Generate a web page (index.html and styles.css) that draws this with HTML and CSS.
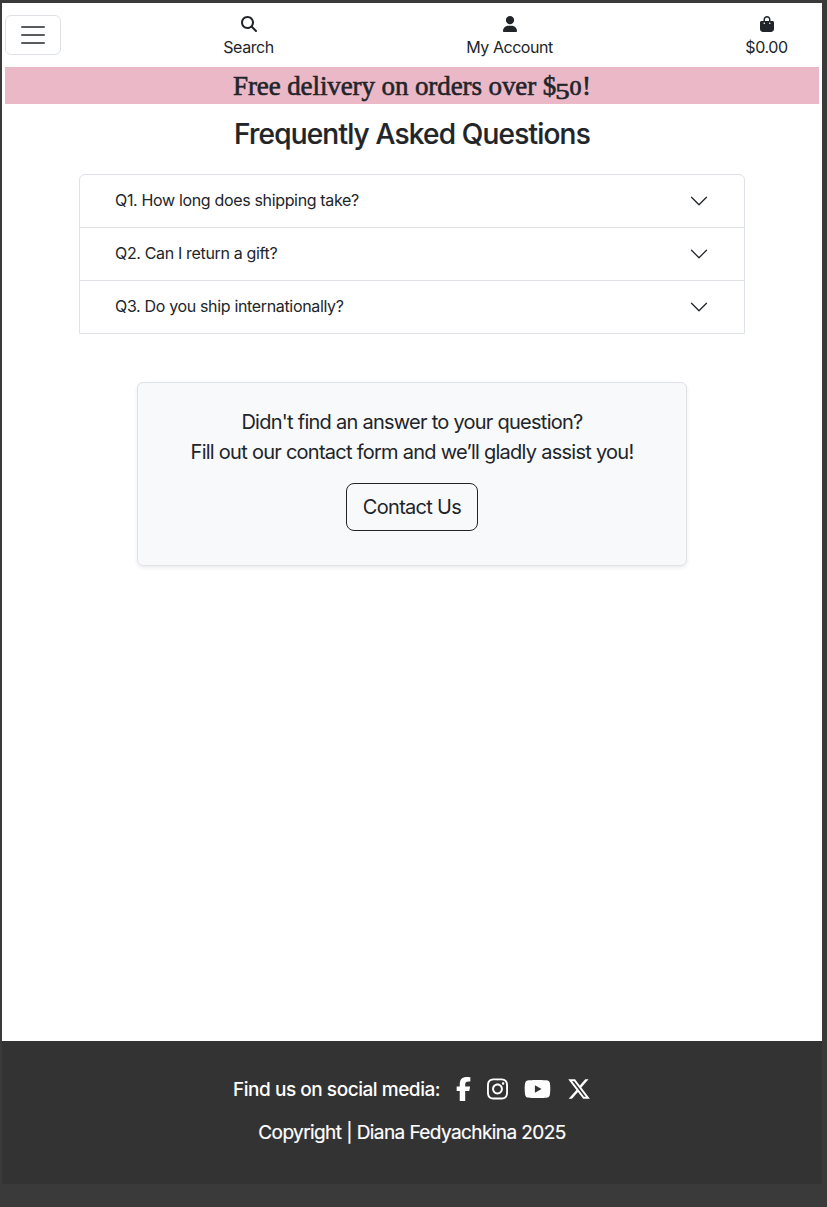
FILE: index.html
```html
<!DOCTYPE html>
<html lang="en">
<head>
<meta charset="utf-8">
<title>Frequently Asked Questions</title>
<link rel="stylesheet" href="styles.css">
</head>
<body>
<div class="page">
  <header class="navbar">
    <button class="toggler" aria-label="Menu">
      <svg width="30" height="30" viewBox="0 0 30 30"><path d="M4 7h22M4 15h22M4 23h22" fill="none" stroke="currentColor" stroke-width="2" stroke-linecap="round"/></svg>
    </button>
    <a class="nav-item search">
      <svg width="16" height="16" viewBox="0 0 512 512"><path d="M416 208c0 45.9-14.9 88.3-40 122.7L502.6 457.4c12.5 12.5 12.5 32.8 0 45.3s-32.8 12.5-45.3 0L330.7 376c-34.4 25.2-76.8 40-122.7 40C93.1 416 0 322.9 0 208S93.1 0 208 0S416 93.1 416 208zM208 352a144 144 0 1 0 0-288 144 144 0 1 0 0 288z"/></svg>
      <span>Search</span>
    </a>
    <a class="nav-item account">
      <svg width="16" height="16" viewBox="-32 0 512 512"><path d="M224 264a132 132 0 1 0 0-264 132 132 0 1 0 0 264zM176 312C78.800 312 0 382.800 0 480 0 497.700 14.300 512 32 512H416c17.700 0 32-14.300 32-32 0-97.200-78.800-168-176-168z"/></svg>
      <span>My Account</span>
    </a>
    <a class="nav-item cart">
      <svg width="14" height="16" viewBox="0 0 448 512"><path d="M160 112c0-35.300 28.700-64 64-64s64 28.700 64 64v48H160V112zm-48 48H48c-26.500 0-48 21.500-48 48V416c0 53 43 96 96 96H352c53 0 96-43 96-96V208c0-26.500-21.500-48-48-48H336V112C336 50.100 285.900 0 224 0S112 50.100 112 112v48zm24 48a24 24 0 1 1 0 48 24 24 0 1 1 0-48zm152 24a24 24 0 1 1 48 0 24 24 0 1 1 -48 0z"/></svg>
      <span>$0.00</span>
    </a>
  </header>
  <div class="banner"><span>Free delivery on orders over $<span class="five">5</span><span class="zero">0</span>!</span></div>
  <main class="main">
    <h1 class="title"><span>Frequently Asked Questions</span></h1>
    <div class="accordion">
      <div class="question"><span class="question-text">Q1. How long does shipping take?</span><svg class="chevron" viewBox="0 0 16 16"><path d="m2 5 6 6 6-6"/></svg></div>
      <div class="question"><span class="question-text">Q2. Can I return a gift?</span><svg class="chevron" viewBox="0 0 16 16"><path d="m2 5 6 6 6-6"/></svg></div>
      <div class="question"><span class="question-text">Q3. Do you ship internationally?</span><svg class="chevron" viewBox="0 0 16 16"><path d="m2 5 6 6 6-6"/></svg></div>
    </div>
    <section class="card">
      <p class="card-text"><span>Didn't find an answer to your question?</span><span>Fill out our contact form and we’ll gladly assist you!</span></p>
      <a class="button">Contact Us</a>
    </section>
  </main>
  <footer class="footer">
    <div class="social">
      <span class="social-label">Find us on social media:</span>
      <svg width="15" height="24" viewBox="0 0 320 512"><path d="M80 299.300V512H196V299.300h86.500l18-97.800H196V166.900c0-51.700 20.300-71.500 72.700-71.500c16.300 0 29.400 .4 37 1.200V7.900C291.400 4 256.400 0 236.200 0C129.300 0 80 50.500 80 159.400v42.100H14v97.800H80z"/></svg>
      <svg width="21" height="24" viewBox="0 0 448 512"><path d="M224.100 141c-63.600 0-114.900 51.300-114.900 114.900s51.300 114.900 114.900 114.900S339 319.500 339 255.900 287.700 141 224.100 141zm0 189.600c-41.100 0-74.700-33.500-74.700-74.700s33.500-74.700 74.700-74.700 74.700 33.500 74.700 74.700-33.600 74.700-74.700 74.700zm146.400-194.300c0 14.900-12 26.800-26.800 26.800-14.900 0-26.800-12-26.800-26.800s12-26.800 26.800-26.800 26.800 12 26.800 26.800zm76.100 27.200c-1.700-35.900-9.900-67.700-36.200-93.900-26.200-26.200-58-34.400-93.900-36.200-37-2.100-147.900-2.100-184.900 0-35.800 1.700-67.600 9.900-93.900 36.100s-34.400 58-36.200 93.900c-2.100 37-2.100 147.900 0 184.900 1.700 35.900 9.900 67.700 36.200 93.900s58 34.400 93.900 36.200c37 2.100 147.900 2.100 184.900 0 35.900-1.700 67.700-9.900 93.900-36.200 26.200-26.200 34.400-58 36.200-93.900 2.100-37 2.100-147.800 0-184.800zM398.800 388c-7.800 19.600-22.900 34.700-42.600 42.600-29.500 11.700-99.500 9-132.100 9s-102.700 2.600-132.100-9c-19.600-7.800-34.700-22.900-42.600-42.600-11.700-29.500-9-99.500-9-132.100s-2.600-102.700 9-132.100c7.800-19.600 22.900-34.700 42.600-42.600 29.500-11.700 99.500-9 132.100-9s102.700-2.600 132.100 9c19.600 7.800 34.700 22.900 42.600 42.600 11.700 29.500 9 99.500 9 132.100s2.700 102.700-9 132.100z"/></svg>
      <svg width="27" height="24" viewBox="0 0 576 512"><path d="M549.655 124.083c-6.281-23.650-24.787-42.276-48.284-48.597C458.781 64 288 64 288 64S117.220 64 74.629 75.486c-23.497 6.322-42.003 24.947-48.284 48.597-11.412 42.867-11.412 132.305-11.412 132.305s0 89.438 11.412 132.305c6.281 23.650 24.787 41.500 48.284 47.821C117.220 448 288 448 288 448s170.780 0 213.371-11.486c23.497-6.321 42.003-24.171 48.284-47.821 11.412-42.867 11.412-132.305 11.412-132.305s0-89.438-11.412-132.305zm-317.510 213.508V175.185l142.739 81.205-142.739 81.201z"/></svg>
      <svg width="24" height="24" viewBox="0 0 512 512"><path d="M389.200 48h70.600L305.600 224.200 487 464H345L233.700 318.600 106.500 464H35.800L200.700 275.500 26.800 48H172.400L272.900 180.900 389.200 48zM364.400 421.800h39.100L151.100 88h-42L364.400 421.800z"/></svg>
    </div>
    <div class="copyright"><span>Copyright | Diana Fedyachkina 2025</span></div>
  </footer>
</div>
</body>
</html>
```
FILE: styles.css
```css
* { box-sizing: border-box; }
body {
  margin: 0;
  height: 1207px;
  padding: 3px 5px 0 2px;
  background: #3a3a3a;
  color: #212529;
  font: 16px/24px Inter, sans-serif;
  overflow: hidden;
}
svg { display: block; fill: currentColor; flex: none; }
.page { display: flex; flex-direction: column; height: 1181px; background: #fff; }
.navbar { display: flex; align-items: flex-start; height: 64px; padding: 12px 0 0 3px; }
.toggler {
  width: 56px; height: 40px; padding: 4px 12px;
  border: 1px solid #dee2e6; border-radius: 6px;
  background: none; color: rgba(33, 37, 41, .75);
}
.nav-item { display: flex; flex-direction: column; align-items: center; gap: 3px; padding-top: 1px; white-space: nowrap; }
.search { width: 50px; margin-left: 162.500px; letter-spacing: -.45px; }
.account { width: 86px; margin-left: 193px; letter-spacing: -.45px; }
.cart { width: 42px; margin-left: 193px; letter-spacing: -.4px; }
.banner {
  height: 37px; margin: 0 3px;
  background: #ebb8c8;
  font: 27px/38px "Liberation Serif", serif;
  text-align: center; white-space: nowrap;
  -webkit-text-stroke: .6px currentColor;
  letter-spacing: -.1px;
}
.five, .zero { display: inline-block; line-height: 1; letter-spacing: 0; transform: scaleX(1.2); }
.five { font-size: 24px; width: 13px; vertical-align: -4px; }
.zero { font-size: 20px; width: 13px; }
.main { flex: 1; display: flex; flex-direction: column; align-items: center; padding-top: 13px; }
.title { margin: 0 0 23px; font-size: 28px; line-height: 34px; font-weight: 500; letter-spacing: -.8px; -webkit-text-stroke: .2px currentColor; }
.accordion { width: 666px; border: 1px solid #dee2e6; border-radius: 6px 6px 0 0; }
.question { display: flex; align-items: center; justify-content: space-between; height: 53px; padding: 0 35px; letter-spacing: -.34px; }
.question:first-child { height: 52px; }
.question + .question { border-top: 1px solid #dee2e6; }
.question-text { padding-bottom: 2px; }
.chevron { width: 20px; height: 20px; fill: none; stroke: #212529; stroke-linecap: round; stroke-linejoin: round; }
.card {
  display: flex; flex-direction: column; align-items: center;
  width: 550px; height: 184px; margin-top: 48px; padding-top: 24px;
  border: 1px solid #dee2e6; border-radius: 6px; background: #f8f9fa;
  box-shadow: 0 2px 4px rgba(0, 0, 0, .075);
  font-size: 20px; line-height: 30px;
}
.card-text { display: flex; flex-direction: column; align-items: center; margin: 0 0 16px; letter-spacing: -.74px; }
.button { width: 132px; height: 48px; border: 1px solid #212529; border-radius: 8px; line-height: 46px; text-align: center; letter-spacing: -.7px; }
.footer { height: 143px; padding-top: 36px; background: #333; color: #fff; font-size: 19px; line-height: 24px; text-align: center; }
.social { display: flex; justify-content: center; align-items: center; gap: 16px; font-weight: 500; letter-spacing: -.46px; }
.social-label { width: 207px; padding-top: 2px; margin: -1px 0; white-space: nowrap; }
.copyright { margin-top: 20px; letter-spacing: -.58px; -webkit-text-stroke: .2px currentColor; }
```
